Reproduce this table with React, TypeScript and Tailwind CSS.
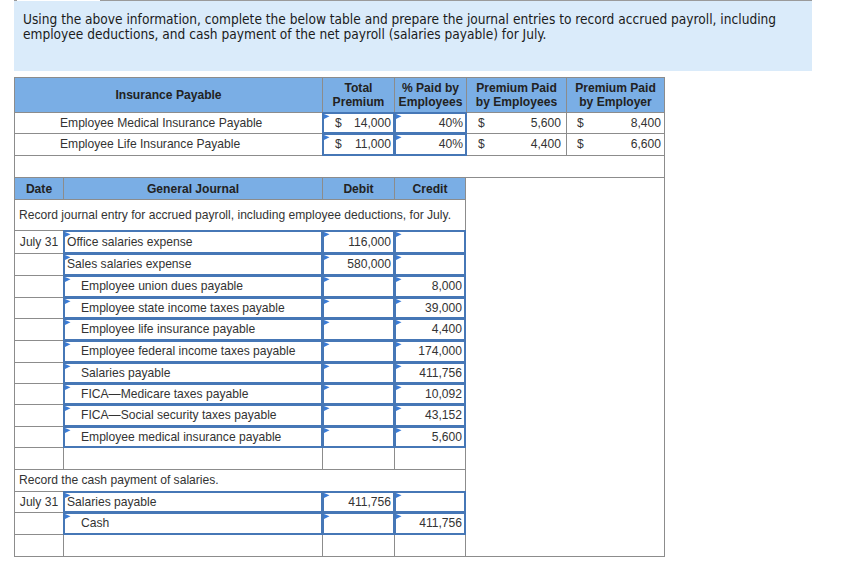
import React from "react";
import clsx from "clsx";

const cn = clsx;

type Entry = {
  date?: string;
  account?: string;
  debit?: string;
  credit?: string;
  indent?: boolean;
  input?: boolean;
  note?: string;
  h: string;
};

const ENTRIES: Entry[] = [
  { note: "Record journal entry for accrued payroll, including employee deductions, for July.", h: "h-[30px]" },
  { date: "July 31", account: "Office salaries expense", debit: "116,000", input: true, h: "h-[22px]" },
  { account: "Sales salaries expense", debit: "580,000", input: true, h: "h-[21px]" },
  { account: "Employee union dues payable", credit: "8,000", indent: true, input: true, h: "h-[21px]" },
  { account: "Employee state income taxes payable", credit: "39,000", indent: true, input: true, h: "h-[20px]" },
  { account: "Employee life insurance payable", credit: "4,400", indent: true, input: true, h: "h-[21px]" },
  { account: "Employee federal income taxes payable", credit: "174,000", indent: true, input: true, h: "h-[21px]" },
  { account: "Salaries payable", credit: "411,756", indent: true, input: true, h: "h-[20px]" },
  { account: "FICA—Medicare taxes payable", credit: "10,092", indent: true, input: true, h: "h-[20px]" },
  { account: "FICA—Social security taxes payable", credit: "43,152", indent: true, input: true, h: "h-[21px]" },
  { account: "Employee medical insurance payable", credit: "5,600", indent: true, input: true, h: "h-[20px]" },
  { h: "h-[21px]" },
  { note: "Record the cash payment of salaries.", h: "h-[21px]" },
  { date: "July 31", account: "Salaries payable", debit: "411,756", input: true, h: "h-[20px]" },
  { account: "Cash", credit: "411,756", indent: true, input: true, h: "h-[21px]" },
  { h: "h-[21px]" },
];

const INSURANCE = [
  { name: "Employee Medical Insurance Payable", total: "14,000", pct: "40%", emp: "5,600", er: "8,400", h: "h-[20px]" },
  { name: "Employee Life Insurance Payable", total: "11,000", pct: "40%", emp: "4,400", er: "6,600", h: "h-[21px]" },
];

function Flag() {
  return (
    <svg className="absolute left-px top-px" width="6" height="6" viewBox="0 0 6 6">
      <polygon points="0,0 5.5,2.2 0,5" fill="#3a7bd5" />
    </svg>
  );
}

function Field({ className, children }: { className?: string; children?: React.ReactNode }) {
  return (
    <div
      className={cn(
        "relative flex items-center bg-white shadow-[0_0_0_1px_#4677b6,inset_0_0_0_1px_#4677b6]",
        className,
      )}
    >
      <Flag />
      {children}
    </div>
  );
}

function Head({ className, children }: { className?: string; children?: React.ReactNode }) {
  return (
    <div className={cn("flex items-center justify-center bg-[#7aaee5] text-center font-bold leading-[14px] text-[#222]", className)}>
      {children}
    </div>
  );
}

export default function App() {
  return (
    <div className="h-[561px] w-[852px] bg-white font-['Liberation_Sans',Arial,sans-serif] text-[12.1px] text-[#333]">
      <div className="ml-[14px] flex h-px w-[798px]">
        <div className="w-[3px] bg-[#9a9a9a]" />
        <div className="w-[83px] bg-white" />
        <div className="flex-1 bg-[#9a9a9a]" />
      </div>
      <div className="ml-[14px] h-[70px] w-[798px] whitespace-nowrap bg-[#daebfa] px-[9px] pt-[11px] font-['DejaVu_Sans_Condensed','DejaVu_Sans',sans-serif] text-[13.6px] leading-[15px] text-[#1b1b1b]">
        Using the above information, complete the below table and prepare the journal entries to record accrued payroll, including
        <br />
        employee deductions, and cash payment of the net payroll (salaries payable) for July.
      </div>

      <div className="ml-[14px] mt-[6px] flex w-[651px] flex-col gap-px bg-[#8c8c8c] p-px">
        {/* insurance table */}
        <div className="grid grid-cols-[307px_71px_71px_99px_97px] gap-px">
          <Head className="h-[34px]">Insurance Payable</Head>
          <Head>Total<br />Premium</Head>
          <Head>% Paid by<br />Employees</Head>
          <Head>Premium Paid<br />by Employees</Head>
          <Head>Premium Paid<br />by Employer</Head>
          {INSURANCE.map((row) => (
            <React.Fragment key={row.name}>
              <div className={cn("flex items-center bg-white pl-[45px]", row.h)}>{row.name}</div>
              <Field className="justify-between pl-[12px] pr-[3px]">
                <span>$</span>
                <span>{row.total}</span>
              </Field>
              <Field className="justify-end pr-[3px]">{row.pct}</Field>
              <div className="flex items-center justify-between bg-white pl-[11px] pr-[5px]">
                <span>$</span>
                <span>{row.emp}</span>
              </div>
              <div className="flex items-center justify-between bg-white pl-[10px] pr-[3px]">
                <span>$</span>
                <span>{row.er}</span>
              </div>
            </React.Fragment>
          ))}
          <div className="col-span-5 h-[21px] bg-white" />
        </div>

        {/* general journal */}
        <div className="flex gap-px">
          <div className="grid grid-cols-[48px_258px_71px_70px] gap-px">
            <Head className="h-[21px]">Date</Head>
            <Head>General Journal</Head>
            <Head>Debit</Head>
            <Head>Credit</Head>
            {ENTRIES.map((e, i) =>
              e.note ? (
                <div key={i} className={cn("col-span-4 flex items-center bg-white pl-[4px]", e.h)}>
                  {e.note}
                </div>
              ) : e.input ? (
                <React.Fragment key={i}>
                  <div className={cn("flex items-center justify-center bg-white", e.h)}>{e.date}</div>
                  <Field className={e.indent ? "pl-[17px]" : "pl-[3px]"}>{e.account}</Field>
                  <Field className="justify-end pr-[3px]">{e.debit}</Field>
                  <Field className="justify-end pr-[3px]">{e.credit}</Field>
                </React.Fragment>
              ) : (
                <React.Fragment key={i}>
                  <div className={cn("bg-white", e.h)} />
                  <div className="bg-white" />
                  <div className="bg-white" />
                  <div className="bg-white" />
                </React.Fragment>
              ),
            )}
          </div>
          <div className="flex-1 bg-white" />
        </div>
      </div>
    </div>
  );
}
